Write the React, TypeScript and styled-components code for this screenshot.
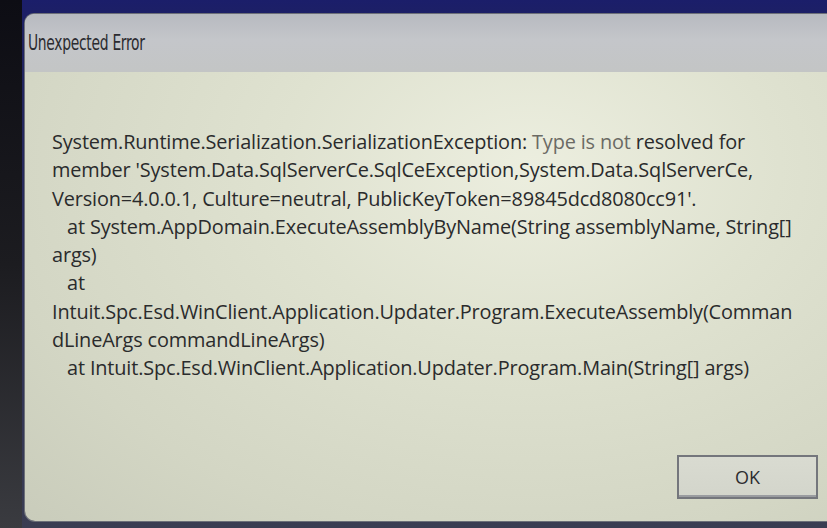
import React from "react";
import styled, { createGlobalStyle } from "styled-components";

const Global = createGlobalStyle`
  html, body { margin: 0; padding: 0; }
  body {
    width: 827px;
    height: 528px;
    overflow: hidden;
    background: #1d2070;
  }
`;

const Screen = styled.div`
  display: flex;
  width: 827px;
  height: 528px;
  background: linear-gradient(180deg, #1b1e6a 0%, #1e2160 6%, #3a3d52 100%);
`;

const Bezel = styled.div`
  width: 22px;
  flex: none;
  background: linear-gradient(180deg, #0d0d14 0%, #1c1c20 50%, #3a3b40 100%);
`;

const Dialog = styled.div`
  flex: 1;
  margin: 14px -12px 7px 3px;
  display: flex;
  flex-direction: column;
  border-radius: 9px 0 0 10px;
  overflow: hidden;
  background: radial-gradient(ellipse at 62% 30%, #eceedf 0%, #dfe2d0 35%, #d3d6c4 75%, #c9ccbb 100%);
  box-shadow: 0 0 0 1px #6c6f78;
`;

const TitleBar = styled.div`
  height: 58px;
  display: flex;
  align-items: center;
  padding-left: 3px;
  background: linear-gradient(180deg, #b7bac0 0%, #c4c6ca 45%, #c3c5c5 100%);
`;

const Title = styled.span`
  font-family: "DejaVu Sans Condensed", "Liberation Sans Narrow", "Liberation Sans", sans-serif;
  font-size: 22px;
  color: #2b2b30;
  letter-spacing: -0.4px;
  transform: scaleX(0.7);
  transform-origin: left center;
  white-space: nowrap;
  margin-top: -2px;
`;

const Body = styled.div`
  flex: 1;
  display: flex;
  flex-direction: column;
  padding: 56px 0 0 27px;
`;

const Message = styled.div`
  font-family: "Open Sans", "Noto Sans", sans-serif;
  font-size: 19.9px;
  line-height: 28.3px;
  color: #2a2b2c;
  letter-spacing: -0.15px;
`;

const Line = styled.div`
  white-space: pre;
`;

const Soft = styled.span`
  color: #6b6a64;
`;

const Footer = styled.div`
  margin-top: auto;
  display: flex;
  justify-content: flex-end;
  padding: 0 21px 22px 0;
`;

const OkButton = styled.button`
  width: 141px;
  height: 44px;
  background: linear-gradient(180deg, #d9dbd1 0%, #d3d5cb 100%);
  border: 2px solid #74767c;
  border-radius: 0;
  font-family: "Open Sans", "Noto Sans", sans-serif;
  font-size: 18px;
  color: #2c2d30;
  box-shadow: inset 0 -2px 0 #9a9ca0;
  padding: 0;
`;

export default function App() {
  return (
    <>
      <Global />
      <Screen>
        <Bezel />
        <Dialog>
          <TitleBar>
            <Title>Unexpected Error</Title>
          </TitleBar>
          <Body>
            <Message>
              <Line>
                System.Runtime.Serialization.SerializationException: <Soft>Type is not</Soft> resolved for
              </Line>
              <Line>member 'System.Data.SqlServerCe.SqlCeException,System.Data.SqlServerCe,</Line>
              <Line>Version=4.0.0.1, Culture=neutral, PublicKeyToken=89845dcd8080cc91'.</Line>
              <Line>{"   at System.AppDomain.ExecuteAssemblyByName(String assemblyName, String[]"}</Line>
              <Line>args)</Line>
              <Line>{"   at"}</Line>
              <Line>Intuit.Spc.Esd.WinClient.Application.Updater.Program.ExecuteAssembly(Comman</Line>
              <Line>dLineArgs commandLineArgs)</Line>
              <Line>{"   at Intuit.Spc.Esd.WinClient.Application.Updater.Program.Main(String[] args)"}</Line>
            </Message>
            <Footer>
              <OkButton>OK</OkButton>
            </Footer>
          </Body>
        </Dialog>
      </Screen>
    </>
  );
}
